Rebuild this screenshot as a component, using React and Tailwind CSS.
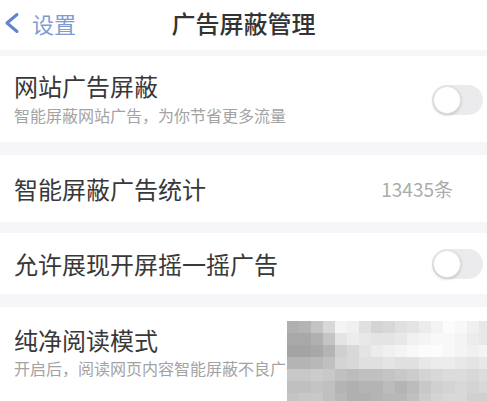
import React from "react";

const mosaic = [
  ["b0","b4","c4","d8","f4","f0","e0","d4","d8","e0","e4","ec","f4","fc","f8","f0","e8"],
  ["a8","a8","b0","c4","e4","ec","e8","e4","e4","e8","f0","f4","f8","f8","f4","ec","e8"],
  ["a4","a4","a8","b4","d0","d8","e4","ec","f0","f4","f8","fc","fc","f8","f4","f0","f4"],
  ["b4","b4","b8","c0","d4","d8","e0","e0","e4","e0","e0","e8","ec","ec","e8","e4","e8"],
  ["c8","c8","cc","c8","c0","bc","c0","c0","c4","c8","cc","d4","d8","dc","dc","d8","dc"],
  ["c0","c0","c4","c0","b4","b0","b4","b4","bc","b4","bc","c8","d0","d4","d8","d4","d8"],
  ["c4","c8","c8","c0","b8","b0","b0","b4","b8","b8","c0","cc","d4","d8","d8","d0","d0"],
];

function Toggle() {
  return (
    <div className="w-[51px] h-[30px] rounded-full bg-[#ebebed] p-[1px] flex items-center">
      <div className="w-[28px] h-[28px] rounded-full bg-white shadow-[0_1px_3px_rgba(0,0,0,0.2)] border border-[#e4e4e4]" />
    </div>
  );
}

function Band({ h }) {
  return <div className={`bg-[#f6f6f8] ${h}`} />;
}

export default function App() {
  return (
    <div
      className="relative w-[487px] h-[401px] overflow-hidden bg-white text-[#383838]"
      style={{ fontFamily: '"Noto Sans CJK SC", "Noto Sans", sans-serif' }}
    >
      <div className="h-[50px] relative flex items-center justify-center">
        <div className="absolute left-[4px] top-0 h-[46px] flex items-center">
          <svg width="16" height="22" viewBox="0 0 16 22" className="mr-[12px]">
            <path d="M13 2.5 L3 11 L13 19.5" fill="none" stroke="#5f86cc" strokeWidth="3" strokeLinecap="round" strokeLinejoin="round" />
          </svg>
          <span className="text-[22px] leading-[28px] text-[#7f9ccf]">设置</span>
        </div>
        <div className="text-[24px] leading-[30px] font-medium text-[#333] -mt-[4px]">广告屏蔽管理</div>
      </div>
      <Band h="h-[6px]" />
      <div className="h-[86px] flex items-start justify-between pl-[14px] pr-[4px] pt-[16px]">
        <div className="flex flex-col">
          <div className="text-[24px] leading-[28px]">网站广告屏蔽</div>
          <div className="text-[16px] leading-[20px] text-[#a3a3a3] mt-[5px]">智能屏蔽网站广告，为你节省更多流量</div>
        </div>
        <div className="mt-[13px]"><Toggle /></div>
      </div>
      <Band h="h-[13px]" />
      <div className="h-[67px] flex items-center justify-between pl-[14px] pr-[34px]">
        <div className="text-[24px] leading-[28px]">智能屏蔽广告统计</div>
        <div className="text-[19px] leading-[24px] text-[#ababab]">13435条</div>
      </div>
      <Band h="h-[11px]" />
      <div className="h-[61px] flex items-center justify-between pl-[14px] pr-[4px]">
        <div className="text-[24px] leading-[28px]">允许展现开屏摇一摇广告</div>
        <Toggle />
      </div>
      <Band h="h-[13px]" />
      <div className="flex flex-col pl-[14px] pt-[19px]">
        <div className="text-[24px] leading-[28px]">纯净阅读模式</div>
        <div className="text-[16px] leading-[20px] text-[#a3a3a3] mt-[4px] whitespace-nowrap">开启后，阅读网页内容智能屏蔽不良广告</div>
      </div>
      <div className="absolute left-[287px] top-[321px] w-[200px] h-[80px] overflow-hidden grid grid-cols-[repeat(17,12px)] grid-rows-[repeat(7,12px)]">
        {mosaic.flatMap((row, r) =>
          row.map((c, i) => (
            <div key={`${r}-${i}`} style={{ backgroundColor: `#${c}${c}${c}` }} />
          ))
        )}
      </div>
    </div>
  );
}
